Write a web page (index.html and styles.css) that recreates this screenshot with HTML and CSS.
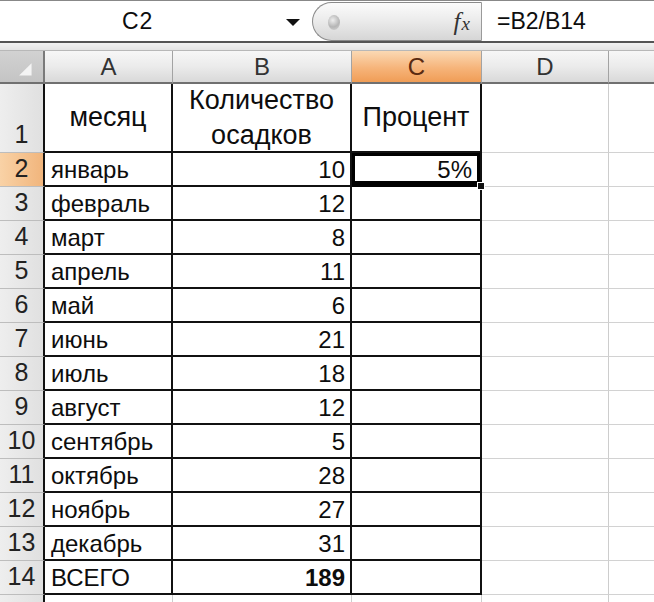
FILE: index.html
```html
<!DOCTYPE html>
<html lang="ru">
<head>
<meta charset="utf-8">
<link rel="stylesheet" href="styles.css">
</head>
<body>
<div class="app">
  <div class="topbar">
    <div class="namebox">
      <span class="name">C2</span>
      <span class="arrow"></span>
    </div>
    <div class="fxbtn">
      <span class="dimple"></span>
      <span class="fx"><i>f</i><span class="fxx">x</span></span>
    </div>
    <div class="formula">=B2/B14</div>
  </div>
  <div class="gap"></div>
  <div class="sheet">
    <div class="ch corner"><svg width="45" height="33" viewBox="0 0 45 33"><polygon points="20,26 33,26 33,13" fill="#f4f4f4"/></svg></div>
    <div class="ch">A</div>
    <div class="ch">B</div>
    <div class="ch sel">C</div>
    <div class="ch">D</div>
    <div class="ch last"></div>

    <div class="rh">1</div>
    <div class="c hd center">месяц</div>
    <div class="c hd center two">Количество<br>осадков</div>
    <div class="c hd center">Процент</div>
    <div class="g"></div>
    <div class="g last"></div>

    <div class="rh sel">2</div>
    <div class="c">январь</div>
    <div class="c num">10</div>
    <div class="c num active">5%<span class="handle"></span></div>
    <div class="g"></div>
    <div class="g last"></div>

    <div class="rh">3</div>
    <div class="c">февраль</div>
    <div class="c num">12</div>
    <div class="c"></div>
    <div class="g"></div>
    <div class="g last"></div>

    <div class="rh">4</div>
    <div class="c">март</div>
    <div class="c num">8</div>
    <div class="c"></div>
    <div class="g"></div>
    <div class="g last"></div>

    <div class="rh">5</div>
    <div class="c">апрель</div>
    <div class="c num">11</div>
    <div class="c"></div>
    <div class="g"></div>
    <div class="g last"></div>

    <div class="rh">6</div>
    <div class="c">май</div>
    <div class="c num">6</div>
    <div class="c"></div>
    <div class="g"></div>
    <div class="g last"></div>

    <div class="rh">7</div>
    <div class="c">июнь</div>
    <div class="c num">21</div>
    <div class="c"></div>
    <div class="g"></div>
    <div class="g last"></div>

    <div class="rh">8</div>
    <div class="c">июль</div>
    <div class="c num">18</div>
    <div class="c"></div>
    <div class="g"></div>
    <div class="g last"></div>

    <div class="rh">9</div>
    <div class="c">август</div>
    <div class="c num">12</div>
    <div class="c"></div>
    <div class="g"></div>
    <div class="g last"></div>

    <div class="rh">10</div>
    <div class="c">сентябрь</div>
    <div class="c num">5</div>
    <div class="c"></div>
    <div class="g"></div>
    <div class="g last"></div>

    <div class="rh">11</div>
    <div class="c">октябрь</div>
    <div class="c num">28</div>
    <div class="c"></div>
    <div class="g"></div>
    <div class="g last"></div>

    <div class="rh">12</div>
    <div class="c">ноябрь</div>
    <div class="c num">27</div>
    <div class="c"></div>
    <div class="g"></div>
    <div class="g last"></div>

    <div class="rh">13</div>
    <div class="c">декабрь</div>
    <div class="c num">31</div>
    <div class="c"></div>
    <div class="g"></div>
    <div class="g last"></div>

    <div class="rh">14</div>
    <div class="c">ВСЕГО</div>
    <div class="c num bold">189</div>
    <div class="c"></div>
    <div class="g"></div>
    <div class="g last"></div>

    <div class="rh"></div>
    <div class="g"></div>
    <div class="g"></div>
    <div class="g"></div>
    <div class="g"></div>
    <div class="g last"></div>
  </div>
</div>
</body>
</html>
```

FILE: styles.css
```css
* { box-sizing: border-box; }
html, body { margin: 0; padding: 0; background: #fff; }
body { width: 654px; height: 602px; overflow: hidden; font-family: "Liberation Sans", Arial, sans-serif; color: #0d0d0d; }
.app { display: flex; flex-direction: column; width: 654px; }

.topbar {
  height: 43px;
  display: flex;
  align-items: stretch;
  border-top: 1px solid #888;
  border-bottom: 2px solid #555;
  background: #fff;
}
.namebox {
  width: 312px;
  position: relative;
  display: flex;
  align-items: center;
}
.name { font-size: 23px; margin-left: 122px; letter-spacing: 1px; }
.arrow {
  position: absolute;
  left: 286px;
  top: 18px;
  width: 0; height: 0;
  border-left: 7px solid transparent;
  border-right: 7px solid transparent;
  border-top: 7px solid #111;
}
.fxbtn {
  width: 170px;
  margin: 1px 0 0 0;
  border: 1px solid #8a8a8a;
  border-right: 1px solid #9a9a9a;
  border-radius: 22px 0 0 22px;
  background: linear-gradient(#fbfbfb, #ececec 45%, #d6d6d6);
  position: relative;
  display: flex;
  align-items: center;
  justify-content: flex-end;
  padding-right: 11px;
}
.dimple {
  position: absolute;
  left: 15px;
  top: 12px;
  width: 12px;
  height: 15px;
  border-radius: 50%;
  background: radial-gradient(circle at 40% 35%, #eeeeee 0, #b5b5b5 55%, #dadada 100%);
}
.fx { font-family: "Liberation Serif", "Times New Roman", serif; color: #333; font-size: 25px; }
.fx i { font-style: italic; }
.fxx { font-style: italic; font-size: 19px; margin-left: 1px; }
.formula {
  flex: 1;
  display: flex;
  align-items: center;
  padding-left: 15px;
  font-size: 23px;
  background: #fff;
}

.gap {
  height: 8px;
  background: linear-gradient(#f2f2f2, #e4e4e4);
  border-bottom: 1px solid #b8b8b8;
}

.sheet {
  display: grid;
  grid-template-columns: 45px 128px 179px 130px 127px 45px;
  grid-template-rows: 33px 69px repeat(13, 34px) 34px;
}
.ch {
  background: linear-gradient(#f7f7f7, #ebebeb 50%, #d9d9d9);
  border-right: 1px solid #a3a3a3;
  border-bottom: 2px solid #707070;
  display: flex;
  align-items: center;
  justify-content: center;
  font-size: 24px;
  color: #333;
}
.ch.sel {
  background: linear-gradient(#fbd9b4, #f6b47a 55%, #f09d56);
  color: #5a2a10;
}
.ch.corner { background: linear-gradient(#d2d2d2, #c4c4c4); border-right: 2px solid #7a7a7a; }
.ch.corner svg { display: block; }
.ch.last { border-right: none; }

.rh {
  background: linear-gradient(90deg, #eeeeee, #e0e0e0);
  border-right: 2px solid #111;
  border-bottom: 1px solid #bdbdbd;
  display: flex;
  align-items: flex-end;
  justify-content: center;
  font-size: 25px;
  color: #222;
  padding-bottom: 3px;
}
.rh.sel { background: linear-gradient(90deg, #f9d2a6, #f1b57c); }

.c {
  background: #fff;
  border-right: 2px solid #111;
  border-bottom: 2px solid #111;
  display: flex;
  align-items: center;
  padding: 2px 6px 0 6px;
  font-size: 24px;
  white-space: nowrap;
}
.c.num { justify-content: flex-end; padding-right: 5px; }
.c.bold { font-weight: bold; }
.c.hd { font-size: 27px; justify-content: center; text-align: center; line-height: 35px; padding: 0; }
.c.active {
  position: relative;
  box-shadow: inset 0 0 0 3px #000;
  border-bottom: 3px solid #000;
  padding-right: 8px;
}
.handle {
  position: absolute;
  right: -5px;
  bottom: -6px;
  width: 8px;
  height: 8px;
  background: #111;
  border: 1px solid #fff;
}

.g {
  background: #fff;
  border-right: 1px solid #cdcdcd;
  border-bottom: 1px solid #d2d2d2;
}
.g.last { border-right: none; }
```
